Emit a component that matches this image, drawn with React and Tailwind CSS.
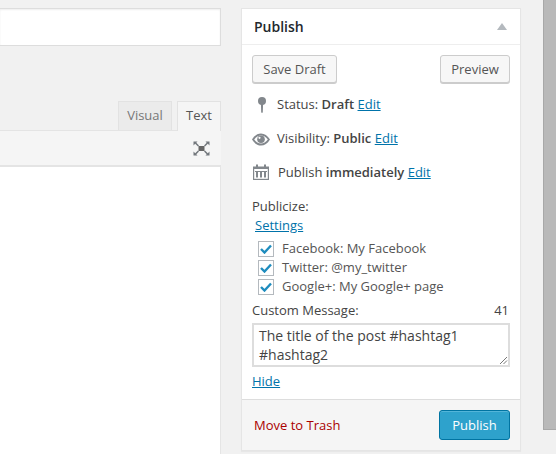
const font = { fontFamily: '"Open Sans", sans-serif' };

function PinIcon() {
  return (
    <svg width="10" height="16" viewBox="0 0 10 16" className="shrink-0">
      <circle cx="5" cy="4" r="4" fill="#82878c" />
      <path d="M3.9 7H6.1L5.8 15.2C5.7 16 4.3 16 4.2 15.2Z" fill="#82878c" />
    </svg>
  );
}

function EyeIcon() {
  return (
    <svg width="18" height="13" viewBox="0 0 18 13" className="shrink-0">
      <path d="M0 6.5C2.5 2.5 5.5 0.5 9 0.5S15.5 2.5 18 6.5C15.5 10.5 12.5 12.5 9 12.5S2.5 10.5 0 6.5Z" fill="#82878c" />
      <path d="M2.2 6.5C4.2 3.9 6.4 2.5 9 2.5S13.8 3.9 15.8 6.5C13.8 9.1 11.6 10.5 9 10.5S4.2 9.1 2.2 6.5Z" fill="#fff" />
      <circle cx="9" cy="6.2" r="3.8" fill="#82878c" />
      <circle cx="7.5" cy="4.8" r="1.1" fill="#fff" />
    </svg>
  );
}

function CalendarIcon() {
  return (
    <svg width="16" height="16" viewBox="0 0 16 16" className="shrink-0">
      <path d="M0 2.5H3V0.5H5V2.5H11V0.5H13V2.5H16V16H0Z" fill="#82878c" />
      <rect x="1.2" y="5" width="13.6" height="9.8" fill="#fff" />
      <rect x="3" y="7.5" width="2" height="6" fill="#82878c" />
      <rect x="7" y="7.5" width="2" height="6" fill="#82878c" />
      <rect x="11" y="7.5" width="2" height="6" fill="#82878c" />
      <rect x="2" y="7" width="12" height="1" fill="#82878c" />
    </svg>
  );
}

function ExpandIcon() {
  return (
    <svg width="17" height="15" viewBox="0 0 17 15">
      <rect x="5.5" y="5" width="6" height="5" fill="#666" />
      <path d="M0.5 0.5H4.5L3.3 1.7L6 4.4L5 5.4L2.2 2.7L0.5 4.5Z" fill="#72777c" />
      <path d="M16.5 0.5H12.5L13.7 1.7L11 4.4L12 5.4L14.8 2.7L16.5 4.5Z" fill="#72777c" />
      <path d="M0.5 14.5H4.5L3.3 13.3L6 10.6L5 9.6L2.2 12.3L0.5 10.5Z" fill="#72777c" />
      <path d="M16.5 14.5H12.5L13.7 13.3L11 10.6L12 9.6L14.8 12.3L16.5 10.5Z" fill="#72777c" />
    </svg>
  );
}

function CheckRow({ label }) {
  return (
    <div className="flex items-center h-[19px]">
      <span className="flex items-center justify-center w-4 h-4 border border-[#b4b9be] bg-white shrink-0">
        <svg width="12" height="10" viewBox="0 0 12 10">
          <path d="M1 5L4.5 8.5L11 1.5" fill="none" stroke="#1e8cbe" strokeWidth="2.4" />
        </svg>
      </span>
      <span className="ml-[8px] text-[#555]">{label}</span>
    </div>
  );
}

function EditLink() {
  return <a href="#" className="text-[#0073aa] underline">Edit</a>;
}

export default function App() {
  return (
    <div style={font} className="flex w-[556px] h-[454px] overflow-hidden bg-[#f1f1f1] text-[13px] leading-[19px] text-[#444]">
      <div className="w-[221px] shrink-0 pt-[8px] flex flex-col">
        <div className="h-[38px] bg-white border border-l-0 border-[#ddd] shadow-[inset_0_1px_2px_rgba(0,0,0,0.07)]" />
        <div className="h-[84px] flex items-end justify-end">
          <div className="w-[54px] h-[29px] pb-[2px] flex items-center justify-center bg-[#ebebeb] border border-b-0 border-[#e2e2e2] text-[#777]">Visual</div>
          <div className="w-[44px] h-[30px] ml-[5px] pb-[3px] flex items-center justify-center bg-[#f5f5f5] border border-b-0 border-[#e2e2e2] text-[#555] relative z-10 -mb-px">Text</div>
        </div>
        <div className="h-[37px] bg-[#f5f5f5] border-t border-b-2 border-[#e4e4e4] flex items-center justify-end pr-[11px]">
          <ExpandIcon />
        </div>
        <div className="flex-1 bg-white border-r border-[#e5e5e5]" />
      </div>

      <div className="w-[280px] ml-[20px] mt-[8px] shrink-0 self-start bg-white border border-[#e5e5e5] shadow-[0_1px_1px_rgba(0,0,0,0.04)]">
        <div className="h-[36px] flex items-center justify-between pl-[12px] pr-[13px] border-b border-[#eee]">
          <span className="text-[14px] font-semibold text-[#23282d]">Publish</span>
          <svg width="10" height="7" viewBox="0 0 10 7"><path d="M5 0L10 7H0Z" fill="#b4b9be" /></svg>
        </div>

        <div className="px-[10px] pt-[10px]">
          <div className="flex justify-between">
            <button className="h-[28px] w-[85px] bg-[#f7f7f7] border border-[#ccc] rounded-[3px] text-[#555] shadow-[0_1px_0_#ccc]">Save Draft</button>
            <button className="h-[28px] w-[70px] bg-[#f7f7f7] border border-[#ccc] rounded-[3px] text-[#555] shadow-[0_1px_0_#ccc]">Preview</button>
          </div>

          <div className="mt-[12px] h-[34px] flex items-start">
            <span className="w-[25px] pl-[5px] pt-[2px] flex"><PinIcon /></span>
            <span>Status: <b className="font-semibold">Draft</b> <EditLink /></span>
          </div>
          <div className="h-[34px] flex items-start">
            <span className="w-[25px] pt-[4px] flex"><EyeIcon /></span>
            <span>Visibility: <b className="font-semibold">Public</b> <EditLink /></span>
          </div>
          <div className="h-[34px] flex items-start">
            <span className="w-[26px] pl-px pt-[1px] flex"><CalendarIcon /></span>
            <span>Publish <b className="font-semibold">immediately</b> <EditLink /></span>
          </div>

          <div>Publicize:</div>
          <a href="#" className="block ml-[3px] text-[#0073aa] underline">Settings</a>
          <div className="mt-[4px] pl-[6px]">
            <CheckRow label="Facebook: My Facebook" />
            <CheckRow label="Twitter: @my_twitter" />
            <CheckRow label="Google+: My Google+ page" />
          </div>
          <div className="mt-[5px] flex justify-between pr-px">
            <span>Custom Message:</span>
            <span>41</span>
          </div>
          <div className="relative mt-[3px] h-[44px] border-2 border-[#ddd] bg-white px-[5px] text-[14px] leading-[19px] text-[#444] overflow-hidden">
            <div className="pt-[1px]">The title of the post #hashtag1</div>
            <div>#hashtag2</div>
            <svg width="9" height="9" viewBox="0 0 9 9" className="absolute right-0 bottom-0">
              <path d="M1 8L8 1M4.5 8L8 4.5" stroke="#777" strokeWidth="1" />
            </svg>
          </div>
          <a href="#" className="block mt-[5px] text-[#0073aa] underline">Hide</a>
        </div>

        <div className="mt-[8px] h-[51px] bg-[#f5f5f5] border-t border-[#ddd] flex items-center justify-between pl-[12px] pr-[10px]">
          <a href="#" className="text-[#a00]">Move to Trash</a>
          <button className="h-[30px] w-[71px] bg-[#2ea2cc] border border-[#0074a2] rounded-[3px] text-white shadow-[inset_0_1px_0_rgba(120,200,230,0.5)]">Publish</button>
        </div>
      </div>

      <div className="ml-[22px] w-[13px] h-[430px] shrink-0 bg-[#b9b9b9] border-l border-b border-[#a8a8a8]" />
    </div>
  );
}
